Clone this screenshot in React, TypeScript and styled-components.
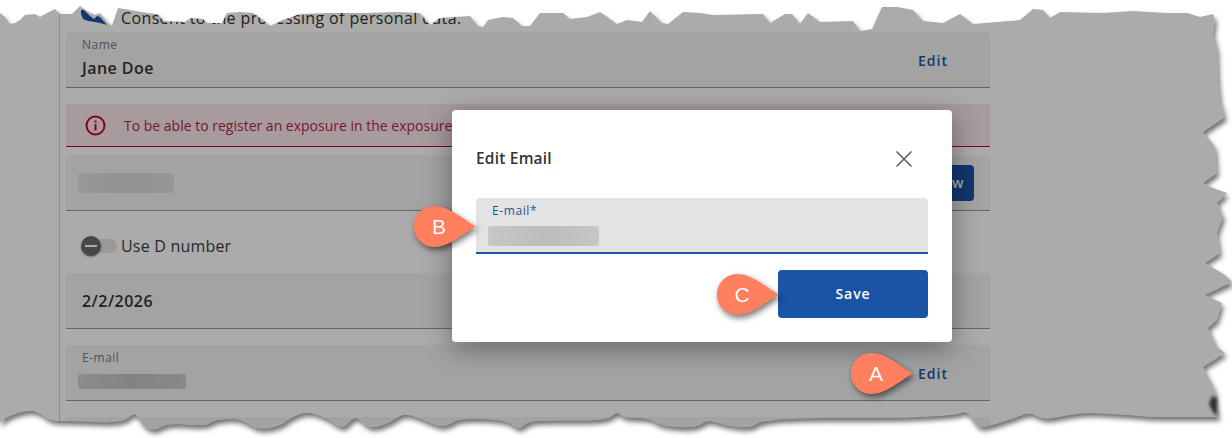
import styled, { createGlobalStyle } from "styled-components";
import { X } from "lucide-react";

const GlobalStyle = createGlobalStyle`
  html, body {
    margin: 0;
    padding: 0;
    background: #fff;
  }
  * {
    box-sizing: border-box;
  }
`;

const Sheet = styled.div`
  position: relative;
  display: flex;
  width: 1232px;
  height: 438px;
  overflow: hidden;
  background: #fff;
  font-family: "Open Sans", "Liberation Sans", sans-serif;
  color: #333;
`;

const Rail = styled.div`
  flex: 0 0 59px;
`;

const Content = styled.main`
  display: flex;
  flex-direction: column;
  width: 931px;
  padding-left: 6px;
  border-left: 1px solid #d0d0d0;
`;

const ConsentRow = styled.div`
  display: flex;
  align-items: center;
  gap: 14px;
  flex: 0 0 32px;
  padding: 4px 0 0 15px;
  font-size: 16px;
  letter-spacing: 0.37px;
  white-space: nowrap;
`;

const Field = styled.section<{ $mb?: number }>`
  display: flex;
  align-items: center;
  justify-content: space-between;
  flex: 0 0 56px;
  padding: 0 16px;
  margin-bottom: ${(p) => p.$mb ?? 16}px;
  background: #f3f3f3;
  border-bottom: 1px solid #999;
  border-radius: 4px 4px 0 0;
`;

const FieldText = styled.div`
  display: flex;
  flex-direction: column;
  align-self: flex-start;
  padding-top: 6px;
`;

const Label = styled.span`
  font-size: 12px;
  line-height: 14px;
  letter-spacing: 0.5px;
  color: #7c7c7c;
`;

const Value = styled.span<{ $mt?: number }>`
  margin-top: ${(p) => p.$mt ?? 0}px;
  font-size: 16px;
  line-height: 24px;
  font-weight: 600;
  letter-spacing: 0.45px;
  color: #333;
`;

const EditLink = styled.a`
  margin: 2px 26px 0 0;
  font-size: 14px;
  font-weight: 600;
  letter-spacing: 1px;
  color: #1a54a6;
`;

const Redacted = styled.div<{ $w: number; $h: number; $tone: string; $mt?: number }>`
  width: ${(p) => p.$w}px;
  height: ${(p) => p.$h}px;
  margin: ${(p) => p.$mt ?? 0}px 0 0 -4px;
  border-radius: 3px;
  background: ${(p) => p.$tone};
`;

const Alert = styled.div`
  display: flex;
  align-items: center;
  gap: 18px;
  flex: 0 0 43px;
  padding-left: 19px;
  margin-bottom: 8px;
  background: #f9e8ea;
  border-bottom: 1px solid #c8002d;
  font-size: 14px;
  color: #b71f4c;
`;

const AlertIcon = styled.svg`
  flex: 0 0 21px;
`;

const ViewButton = styled.button`
  width: 80px;
  height: 36px;
  padding: 0 10px;
  border: 0;
  border-radius: 4px;
  background: #1a54a6;
  color: #fff;
  font: 600 14px "Open Sans", sans-serif;
  letter-spacing: 0.5px;
  text-align: right;
`;

const ToggleRow = styled.div`
  display: flex;
  align-items: center;
  gap: 4px;
  flex: 0 0 62px;
  padding: 8px 0 0 15px;
  font-size: 16px;
  letter-spacing: 0.2px;
  color: #3c3c3c;
`;

const Track = styled.div`
  display: flex;
  align-items: center;
  width: 36px;
  height: 14px;
  border-radius: 7px;
  background: #e6e6e6;
`;

const Thumb = styled.div`
  display: flex;
  align-items: center;
  justify-content: center;
  flex: 0 0 20px;
  height: 20px;
  border-radius: 50%;
  background: #6b6b6b;
  box-shadow: 0 1px 2px rgba(0, 0, 0, 0.4);

  &::before {
    content: "";
    width: 12px;
    height: 2px;
    background: #fff;
  }
`;

const Backdrop = styled.div`
  position: absolute;
  inset: 0;
  background: rgba(0, 0, 0, 0.33);
`;

const Modal = styled.div`
  position: absolute;
  left: 452px;
  top: 110px;
  width: 500px;
  padding: 0 24px 24px;
  background: #fff;
  border-radius: 4px;
  box-shadow: 0 6px 28px rgba(0, 0, 0, 0.4);
`;

const ModalHeader = styled.header`
  display: flex;
  align-items: center;
  justify-content: space-between;
  height: 88px;
  padding: 19px 10px 11px 0;
`;

const ModalTitle = styled.h2`
  margin: 0;
  font-size: 15.5px;
  font-weight: 600;
  letter-spacing: 0.2px;
  color: #333;
`;

const CloseIcon = styled(X)`
  display: block;
  margin-top: 2px;
  color: #666;
`;

const InputBox = styled.div`
  display: flex;
  flex-direction: column;
  height: 56px;
  padding: 6px 16px 0;
  background: #e3e3e3;
  border-bottom: 2px solid #1a54a6;
  border-radius: 4px 4px 0 0;
`;

const InputLabel = styled.label`
  font-size: 12px;
  line-height: 14px;
  letter-spacing: 0.6px;
  font-weight: 500;
  color: #1a54a6;
`;

const Actions = styled.div`
  display: flex;
  justify-content: flex-end;
  margin-top: 16px;
`;

const SaveButton = styled.button`
  width: 150px;
  height: 48px;
  padding-bottom: 2px;
  border: 0;
  border-radius: 4px;
  background: #1a54a6;
  color: #fff;
  font: 600 14px "Open Sans", sans-serif;
  letter-spacing: 0.9px;
`;

const Callout = styled.div<{ $left: number; $top: number }>`
  position: absolute;
  left: ${(p) => p.$left}px;
  top: ${(p) => p.$top}px;
  width: 62px;
  height: 41px;
  filter: drop-shadow(2px 3px 3px rgba(0, 0, 0, 0.55));
`;

const CalloutLetter = styled.span`
  position: absolute;
  left: 5px;
  top: 0;
  width: 40px;
  font: 21px/41px "Liberation Sans", Arial, sans-serif;
  text-align: center;
  color: #fff;
`;

const TornEdge = styled.svg`
  position: absolute;
  inset: 0;
  pointer-events: none;
`;

// top and right run jagged, the bottom is a soft curve
const topRight = [
  [0, 13], [4, 16], [10, 24], [15, 23], [20, 20], [25, 15], [35, 14], [40, 17], [47, 13], [55, 9], [60, 14], [72, 14], [80, 6],
  [88, 12], [95, 15], [100, 13], [107, 22], [112, 26], [118, 8], [130, 10], [147, 13], [158, 14], [163, 21], [185, 22],
  [190, 18], [203, 19], [207, 23], [222, 23], [227, 13], [240, 12], [253, 13], [263, 20], [270, 26], [283, 20], [300, 14], [327, 13], [350, 13],
  [367, 13], [395, 12], [420, 13], [430, 25], [440, 18], [455, 17], [470, 16], [478, 26], [483, 27], [488, 20], [503, 17], [513, 18],
  [522, 26], [530, 26], [540, 13], [563, 13], [570, 19], [587, 17], [600, 12], [617, 24], [627, 20], [642, 22], [650, 11],
  [662, 23], [668, 24], [683, 12], [700, 13], [713, 15], [763, 14], [770, 23], [785, 14], [792, 14], [800, 24], [808, 13],
  [820, 22], [853, 21], [860, 31], [872, 29], [882, 7], [897, 7], [913, 10], [923, 21], [943, 23], [960, 14], [973, 24],
  [1020, 20], [1033, 9], [1043, 10], [1050, 18], [1060, 12], [1103, 13], [1133, 11], [1167, 13], [1187, 13], [1200, 17],
  [1213, 14], [1215, 20], [1213, 33], [1217, 50], [1218, 80], [1220, 100], [1225, 117], [1203, 132], [1215, 147], [1217, 173],
  [1203, 183], [1213, 188], [1227, 193], [1217, 203], [1223, 217], [1217, 233], [1220, 253], [1205, 263], [1225, 275],
  [1232, 282], [1205, 295], [1222, 303], [1217, 320], [1208, 328], [1217, 347], [1225, 353], [1203, 367], [1215, 390],
  [1218, 417],
];

const bottom = [
  [1177, 417], [1150, 417], [1093, 412], [1067, 415], [1043, 420], [1030, 412], [1017, 417], [987, 427],
  [977, 427], [967, 410], [957, 415], [900, 418], [840, 418], [810, 418], [763, 420], [750, 428], [727, 426], [707, 419],
  [697, 428], [660, 426], [650, 418], [623, 418], [617, 411], [607, 421], [537, 420], [527, 423], [518, 430], [507, 420],
  [460, 418], [447, 426], [437, 426], [420, 418], [403, 413], [390, 423], [373, 428], [365, 425], [355, 415], [343, 430],
  [327, 418], [307, 411], [290, 418], [280, 426], [257, 430], [240, 418], [213, 420], [207, 426], [167, 423], [155, 431],
  [143, 426], [135, 411], [123, 423], [73, 421], [50, 421], [40, 413], [30, 410], [17, 413], [5, 418], [0, 423],
];

const buildTorn = () => {
  const out = ["M" + topRight.map(([x, y]) => `${x} ${y}`).join("L")];
  for (let i = 0; i < bottom.length - 1; i++) {
    const [x, y] = bottom[i];
    const [nx, ny] = bottom[i + 1];
    out.push(`Q${x} ${y} ${(x + nx) / 2} ${(y + ny) / 2}`);
  }
  out.push("L0 423Z");
  return out.join("");
};

const tornPath = buildTorn();

const Torn = () => (
  <TornEdge width="1232" height="438" viewBox="0 0 1232 438">
    <defs>
      <filter id="sheetShadow" x="-2%" y="-5%" width="104%" height="110%" colorInterpolationFilters="sRGB">
        <feOffset in="SourceAlpha" dx="2" dy="4" />
        <feGaussianBlur stdDeviation="2.4" />
        <feComposite in2="SourceAlpha" operator="out" />
        <feColorMatrix values="0 0 0 0 0  0 0 0 0 0  0 0 0 0 0  0 0 0 0.55 0" />
      </filter>
      <filter id="smudge" x="-50%" y="-50%" width="200%" height="200%">
        <feGaussianBlur stdDeviation="1.5" />
      </filter>
    </defs>
    <path d={`M0 0H1232V438H0Z${tornPath}`} fill="#fff" fillRule="evenodd" />
    <path d={tornPath} fill="#000" filter="url(#sheetShadow)" />
    <path d="M1212 396L1217 398L1217 416L1213 412L1209 404Z" fill="#333" filter="url(#smudge)" />
  </TornEdge>
);

const Pointer = ({ letter, left, top }: { letter: string; left: number; top: number }) => (
  <Callout $left={left} $top={top}>
    <svg width="62" height="41" viewBox="0 0 62 41">
      <path
        d="M20.5 0C35 0 50 14 62 20.5C50 27 35 41 20.5 41C9 41 0 32 0 20.5C0 9 9 0 20.5 0Z"
        fill="#ff7f5e"
      />
    </svg>
    <CalloutLetter>{letter}</CalloutLetter>
  </Callout>
);

const App = () => {
  return (
    <>
      <GlobalStyle />
      <Sheet>
        <Rail />
        <Content>
          <ConsentRow>
            <svg width="26" height="24" viewBox="81 4 26 24">
              <path d="M81 8L84 8L90 14L94 17L97 14L100 15L107 23L100 21L95 20L88 19L83 17L81 12Z" fill="#1a54a6" />
            </svg>
            Consent to the processing of personal data.
          </ConsentRow>
          <Field>
            <FieldText>
              <Label>Name</Label>
              <Value $mt={4}>Jane Doe</Value>
            </FieldText>
            <EditLink>Edit</EditLink>
          </Field>
          <Alert>
            <AlertIcon width="21" height="21" viewBox="0 0 21 21">
              <circle cx="10.5" cy="10.5" r="9" fill="none" stroke="#c8002d" strokeWidth="2" />
              <rect x="9.5" y="9" width="2" height="6.5" fill="#c8002d" />
              <rect x="9.5" y="5.5" width="2" height="2" fill="#c8002d" />
            </AlertIcon>
            To be able to register an exposure in the exposure register
          </Alert>
          <Field $mb={0}>
            <Redacted $w={96} $h={20} $tone="linear-gradient(90deg, #e2e2e2, #dadada 50%, #e0e0e0)" />
            <ViewButton>View</ViewButton>
          </Field>
          <ToggleRow>
            <Track>
              <Thumb />
            </Track>
            Use D number
          </ToggleRow>
          <Field>
            <Value>2/2/2026</Value>
          </Field>
          <Field>
            <FieldText>
              <Label>E-mail</Label>
              <Redacted $w={108} $h={15} $mt={9} $tone="linear-gradient(90deg, #d0d0d0, #c4c4c4 50%, #cccccc)" />
            </FieldText>
            <EditLink>Edit</EditLink>
          </Field>
          <Field />
        </Content>
        <Backdrop />
        <Modal>
          <ModalHeader>
            <ModalTitle>Edit Email</ModalTitle>
            <CloseIcon size={28} strokeWidth={1.5} />
          </ModalHeader>
          <InputBox>
            <InputLabel>E-mail*</InputLabel>
            <Redacted $w={111} $h={20} $mt={8} $tone="linear-gradient(90deg, #c8c8c8, #bcbcbc 50%, #c6c6c6)" />
          </InputBox>
          <Actions>
            <SaveButton>Save</SaveButton>
          </Actions>
        </Modal>
        <Pointer letter="A" left={851} top={353} />
        <Pointer letter="B" left={414} top={206} />
        <Pointer letter="C" left={717} top={274} />
        <Torn />
      </Sheet>
    </>
  );
};

export default App;
